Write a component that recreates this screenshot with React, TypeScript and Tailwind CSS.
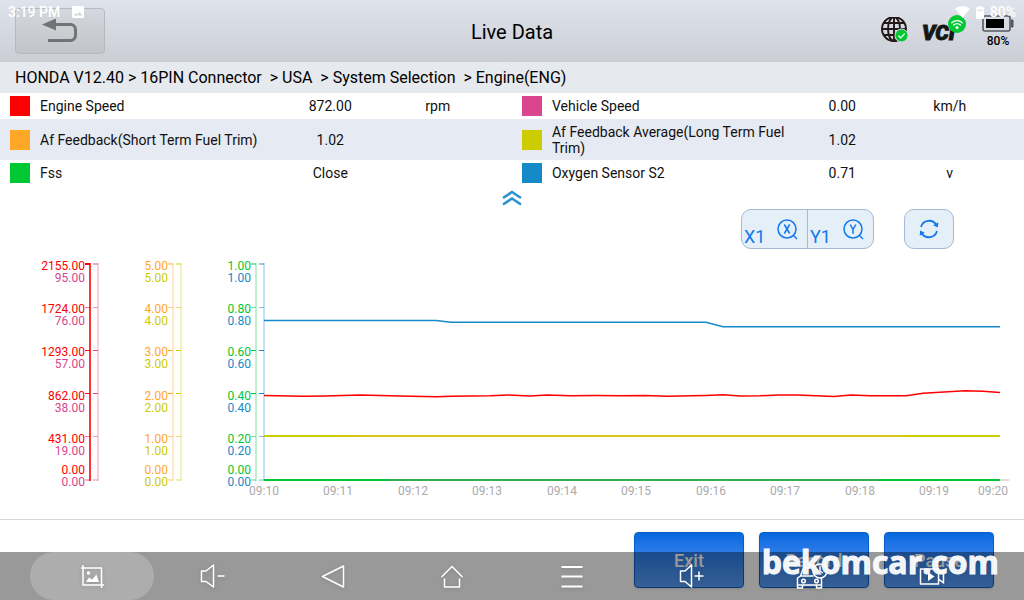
import type { ReactNode } from "react";

type Reading = {
  name: string;
  value: string;
  unit: string;
  swatch: string;
};

const rows: [Reading, Reading][] = [
  [
    { name: "Engine Speed", value: "872.00", unit: "rpm", swatch: "bg-[#ff0000]" },
    { name: "Vehicle Speed", value: "0.00", unit: "km/h", swatch: "bg-[#d9468f]" },
  ],
  [
    { name: "Af Feedback(Short Term Fuel Trim)", value: "1.02", unit: "", swatch: "bg-[#ffa726]" },
    { name: "Af Feedback Average(Long Term Fuel Trim)", value: "1.02", unit: "", swatch: "bg-[#cccc00]" },
  ],
  [
    { name: "Fss", value: "Close", unit: "", swatch: "bg-[#00c832]" },
    { name: "Oxygen Sensor S2", value: "0.71", unit: "v", swatch: "bg-[#148ac8]" },
  ],
];

// tick positions and label baselines, top to bottom
const ticks = [15, 58.5, 101.5, 144.5, 187.5, 231];
const tickOpacity = [0.45, 0.55, 1, 1, 0.55, 0.3];
const upperLabelY = [21, 64, 107, 151, 194, 225];
const lowerLabelY = [33, 76, 119, 163, 206, 237];

const axes = [
  { x: 90, labelX: 85, color: "#ff0000", strong: true, lower: false, labels: ["2155.00", "1724.00", "1293.00", "862.00", "431.00", "0.00"] },
  { x: 98, labelX: 85, color: "#d9468f", strong: false, lower: true, labels: ["95.00", "76.00", "57.00", "38.00", "19.00", "0.00"] },
  { x: 173, labelX: 168, color: "#ffa726", strong: false, lower: false, labels: ["5.00", "4.00", "3.00", "2.00", "1.00", "0.00"] },
  { x: 181, labelX: 168, color: "#cccc00", strong: false, lower: true, labels: ["5.00", "4.00", "3.00", "2.00", "1.00", "0.00"] },
  { x: 256, labelX: 251, color: "#00c832", strong: false, lower: false, labels: ["1.00", "0.80", "0.60", "0.40", "0.20", "0.00"] },
  { x: 264, labelX: 251, color: "#148ac8", strong: false, lower: true, labels: ["1.00", "0.80", "0.60", "0.40", "0.20", "0.00"] },
];

const times = [
  { x: 264, label: "09:10" },
  { x: 338, label: "09:11" },
  { x: 413, label: "09:12" },
  { x: 487, label: "09:13" },
  { x: 562, label: "09:14" },
  { x: 636, label: "09:15" },
  { x: 711, label: "09:16" },
  { x: 785, label: "09:17" },
  { x: 860, label: "09:18" },
  { x: 934, label: "09:19" },
  { x: 993, label: "09:20" },
];

function StatusBar() {
  return (
    <div className="pointer-events-none absolute inset-x-0 top-0 z-10 flex h-6 items-center px-2 text-sm font-medium text-white">
      <span>3:19 PM</span>
      <svg className="ml-3 size-3" viewBox="0 0 12 12" fill="currentColor">
        <path fillRule="evenodd" d="M1.5 0h9A1.5 1.5 0 0 1 12 1.5v9a1.5 1.5 0 0 1-1.5 1.5h-9A1.5 1.5 0 0 1 0 10.5v-9A1.5 1.5 0 0 1 1.5 0ZM1.8 9.5h8.600L7.600 5.800 5.600 8.400 4.200 6.700Z" />
      </svg>
      <div className="ml-auto flex items-center gap-1">
        <svg className="h-3 w-[15px]" viewBox="0 0 15 12" fill="currentColor">
          <path d="M0 2.600C4.200-.8 10.800-.8 15 2.600L7.500 12Z" />
        </svg>
        <svg className="mx-0.5 h-[13px] w-2" viewBox="0 0 8 13" fill="currentColor">
          <path d="M2.500 0h3v1.300H7a1 1 0 0 1 1 1V12a1 1 0 0 1-1 1H1a1 1 0 0 1-1-1V2.300a1 1 0 0 1 1-1h1.500Z" />
          <path d="M1 4.200h6" stroke="#cfd3da" strokeWidth="0.8" />
        </svg>
        <span>80%</span>
      </div>
    </div>
  );
}

function Header() {
  return (
    <header className="grid h-[62px] grid-cols-[1fr_auto_1fr] items-center bg-linear-to-b from-[#dfe3eb] to-[#cbced5] px-[10px]">
      <button
        aria-label="Back"
        className="ml-[5px] flex h-[46px] w-[90px] items-center justify-center rounded border border-[#b6b9bd] bg-linear-to-b from-[#d4d8de] to-[#c1c4c8]"
      >
        <svg className="h-6 w-[38px]" viewBox="0 0 38 24" fill="none">
          <path d="M13 5.500h16.500a5 5 0 0 1 5 5v6a5 5 0 0 1-5 5H7" stroke="#727375" strokeWidth="3" />
          <path d="M1 5.500 15-.5V11.500Z" fill="#727375" />
        </svg>
      </button>
      <h1 className="pt-0.5 text-xl text-black">Live Data</h1>
      <div className="flex items-center justify-end">
        <svg className="mr-3 size-7" viewBox="0 0 28 28" fill="none">
          <g transform="translate(0 -2)">
            <g stroke="#231815" strokeWidth="1.900">
              <circle cx="14" cy="14" r="12" />
              <ellipse cx="14" cy="14" rx="6" ry="12" />
              <path d="M14 2v24M2 14h24M4 8h20M4 20h20" />
            </g>
            <circle cx="21.500" cy="20.500" r="6.500" fill="#00c832" stroke="#d3d6dc" />
            <path d="m18.500 20.700 2.200 2.200 4-4.300" stroke="#fff" strokeWidth="1.300" />
          </g>
        </svg>
        <div className="relative mr-3 flex h-7 w-[50px] items-center pl-0.5">
          <span className="pt-1 text-[21px] font-black italic leading-7 text-[#161616] [-webkit-text-stroke:1px_#161616]">VCI</span>
          <svg className="absolute right-1 -top-0.5 size-[18px]" viewBox="0 0 18 18" fill="none">
            <circle cx="9" cy="9" r="9" fill="#00c832" />
            <path d="M3.800 7.700a7.600 7.600 0 0 1 10.400 0M5.600 10a5 5 0 0 1 6.800 0" stroke="#fff" strokeWidth="1.400" strokeLinecap="round" />
            <circle cx="9" cy="12.500" r="1.500" fill="#fff" />
          </svg>
        </div>
        <div className="flex flex-col items-center text-xs font-medium leading-4 text-black">
          <svg className="mt-0.5 mb-px h-[17px] w-8" viewBox="0 0 32 17" fill="none">
            <rect x="1" y="1" width="27" height="15" rx="2" stroke="#55585f" strokeWidth="1.600" />
            <path d="M29 5h2v7h-2" fill="#55585f" stroke="#55585f" />
            <path d="M4 4h18v9H4z" fill="#000" />
          </svg>
          <span>80%</span>
        </div>
      </div>
    </header>
  );
}

function ReadingCells({ reading }: { reading: Reading }) {
  return (
    <>
      <td className="py-[3px] pl-[10px]">
        <div className="flex items-center gap-[10px]">
          <span className={`size-5 shrink-0 ${reading.swatch}`} />
          <span>{reading.name}</span>
        </div>
      </td>
      <td className="text-center">{reading.value}</td>
      <td className="text-center">{reading.unit}</td>
      <td />
    </>
  );
}

function DataTable() {
  return (
    <table className="w-full table-fixed text-sm leading-4 text-[#111]">
      <colgroup>
        <col className="w-[27%]" />
        <col className="w-[10.5%]" />
        <col className="w-[10.5%]" />
        <col className="w-[2%]" />
        <col className="w-[27%]" />
        <col className="w-[10.5%]" />
        <col className="w-[10.5%]" />
        <col className="w-[2%]" />
      </colgroup>
      <tbody>
        {rows.map(([left, right], i) => (
          <tr key={left.name} className={i % 2 ? "h-[41px] bg-[#e6eaf2]" : "h-[26px]"}>
            <ReadingCells reading={left} />
            <ReadingCells reading={right} />
          </tr>
        ))}
      </tbody>
    </table>
  );
}

function ZoomButton({ axis }: { axis: "X" | "Y" }) {
  return (
    <button className="flex flex-1 items-start justify-between pl-[2px] pr-[9px] pt-2">
      <span className="pt-2 text-lg leading-[22px]">{axis}1</span>
      <svg className="size-[22px]" viewBox="0 0 22 22" fill="none" stroke="currentColor" strokeWidth="1.500">
        <circle cx="11" cy="11" r="9" />
        <path d="m17 17 4 4" />
        {axis === "X" ? <path d="m8.300 6.500 5.400 9m0-9-5.400 9" /> : <path d="m8.200 6.500 2.800 5 2.800-5M11 11.500v4.200" />}
      </svg>
    </button>
  );
}

function ChartControls() {
  return (
    <div className="flex h-10 justify-end gap-[30px] pr-[70px] text-[#0f78ee]">
      <div className="flex w-[133px] divide-x divide-[#a3b9d4] rounded-[10px] border border-[#a3b9d4] bg-[#e5eff8]">
        <ZoomButton axis="X" />
        <ZoomButton axis="Y" />
      </div>
      <button
        aria-label="Refresh"
        className="flex w-[50px] items-center justify-center rounded-[10px] border border-[#a3b9d4] bg-[#e5eff8]"
      >
        <svg className="size-5" viewBox="0 0 20 20" fill="none" stroke="currentColor" strokeWidth="1.800">
          <path d="M2 8a8.400 8.400 0 0 1 15.400-2M18 12a8.400 8.400 0 0 1-15.400 2" />
          <path d="m19.300 3.300-.5 5.200-4.600-2.300ZM.7 16.700l.5-5.200 4.600 2.300Z" fill="currentColor" stroke="none" />
        </svg>
      </button>
    </div>
  );
}

function Chart() {
  return (
    <svg className="w-full" viewBox="0 0 1024 256" fill="none" fontSize="12" role="img" aria-label="Live data graph">
      {axes.map((axis) => (
        <g key={axis.x}>
          <path d={`M${axis.x} 14V232`} stroke={axis.color} strokeWidth="2" opacity={axis.strong ? 0.8 : 0.25} />
          {ticks.map((y, i) => (
            <g key={y}>
              <path
                d={`M${axis.x - 5} ${y}h5`}
                stroke={axis.color}
                strokeWidth={i === 0 || i === 5 ? 2 : 1}
                opacity={axis.strong && i === 0 ? 1 : tickOpacity[i]}
              />
              <text
                x={axis.labelX}
                y={axis.lower ? lowerLabelY[i] : upperLabelY[i]}
                textAnchor="end"
                fill={axis.color}
              >
                {axis.labels[i]}
              </text>
            </g>
          ))}
        </g>
      ))}

      {times.map((t) => (
        <text key={t.label} x={t.x} y="246" textAnchor="middle" fill="#aaaaaa">
          {t.label}
        </text>
      ))}

      {/* Series */}
      <path d="M1000 231h9" stroke="#dddddd" strokeWidth="2" />
      <path d="M264 231H1000" stroke="#00c832" strokeWidth="2" />
      <path d="M387 231H877" stroke="#34b050" strokeWidth="2" />
      <path d="M264 187H1000" stroke="#cccc00" strokeWidth="2" />
      <path d="M340 186.500h65M486 186.500h68" stroke="#ffa726" opacity="0.4" />
      <path d="M356 187H906" stroke="#d8c618" strokeWidth="2" />
      <path d="M264 71.500H436L451 73.300H706L723 77.700H1000" stroke="#148ac8" strokeWidth="1.500" />
      <path
        d="M264 146.600 303 147.300 325 147 360 146 400 147 436 147.800 452 147.200 490 146.700 508 146 530 147 547 146 570 146.700 595 146.500 620 146.700 645 146.500 667 147.300 705 146.500 723 145.800 740 147 760 146.800 778 146H797L834 147.500 851 146 870 146.700H906L923 144.200 965 141.700 983 142.200 1000 143.500"
        stroke="#ff0000"
        strokeWidth="1.500"
      />
    </svg>
  );
}

function ActionButton({ children }: { children: ReactNode }) {
  return (
    <button className="h-14 w-[110px] rounded border border-[#0b5fc4] bg-linear-to-b from-[#0268df] to-[#5a9ff8] pt-0.5 text-lg font-medium text-white shadow">
      {children}
    </button>
  );
}

const navItems = [
  {
    label: "Screenshot",
    icon: (
      <>
        <path d="M4 2v20H25M2 5h20.500V25" />
        <path d="M7 19l3-4.500 3 2 4.500-5L20 19Z" fill="currentColor" stroke="none" />
        <circle cx="9.500" cy="10" r="1.700" fill="currentColor" stroke="none" />
      </>
    ),
  },
  { label: "Volume down", icon: <path d="M2.500 8v10.500H7L14.500 24V2L7 8ZM18.500 13h7" /> },
  { label: "Back", icon: <path d="M3.500 13.500 24.500 3v21Z" /> },
  { label: "Home", icon: <path d="M2.500 14 13 3.500 23.500 14M5.500 15.500V24h15v-8.500" /> },
  { label: "Menu", icon: <path d="M2.500 4h21M2.500 13.500h21M2.500 23.500h21" strokeWidth="2" /> },
  { label: "Volume up", icon: <path d="M1.500 8v10.500H6L12.500 24V2L6 8ZM15.500 13h9M20 8.500v9" /> },
  {
    label: "Vehicle",
    icon: (
      <>
        <path d="M13 5H6L3 13 0 15v7h24v-8M3 13H16M0 22v3h5v-3M19 22v3h5v-3" transform="translate(-1.500 0)" />
        <circle cx="4.500" cy="18" r="1.800" />
        <circle cx="17.500" cy="18" r="1.800" />
        <circle cx="21" cy="8" r="7" />
        <path d="M21 3.500V8l3 2" />
      </>
    ),
  },
  {
    label: "Record screen",
    icon: (
      <>
        <path d="M1.500 6h18v15h-18ZM19.500 11l5-4v13l-5-4" />
        <path d="m9 9 6.500 4.500L9 18Z" fill="currentColor" stroke="none" />
      </>
    ),
  },
];

function NavBar() {
  return (
    <nav className="absolute inset-x-0 bottom-0 grid h-12 grid-cols-8 bg-[#000000]/40 px-8 text-white">
      {navItems.map((item, i) => (
        <button
          key={item.label}
          aria-label={item.label}
          className={`-mx-0.5 flex items-center justify-center rounded-full ${i === 0 ? "bg-white/20" : ""}`}
        >
          <svg
            className="size-[26px] overflow-visible drop-shadow-sm"
            viewBox="0 0 26 26"
            fill="none"
            stroke="currentColor"
            strokeWidth="1.500"
            strokeLinejoin="round"
          >
            {item.icon}
          </svg>
        </button>
      ))}
    </nav>
  );
}

export default function App() {
  return (
    <div className="relative flex min-h-screen flex-col bg-white font-[Roboto,sans-serif]">
      <StatusBar />
      <Header />
      <div className="h-[31px] whitespace-pre bg-[#e6e9ee] px-[15px] text-base leading-[31px] text-black">
        {"HONDA V12.40 > 16PIN Connector  > USA  > System Selection  > Engine(ENG)"}
      </div>

      <main className="flex-1">
        <DataTable />
        <button aria-label="Collapse" className="mx-auto flex h-[23px] w-10 items-center justify-center text-[#2a93cf]">
          <svg className="h-4 w-5" viewBox="0 0 20 16" fill="none" stroke="currentColor" strokeWidth="2.600">
            <path d="m1 8 9-6 9 6M1 14.500l9-6 9 6" />
          </svg>
        </button>
        <ChartControls />
        <Chart />
      </main>

      <footer className="flex h-[81px] items-start justify-end gap-[15px] border-t border-[#d8d8d8] px-[30px] pt-3">
        <ActionButton>Exit</ActionButton>
        <ActionButton>Record</ActionButton>
        <ActionButton>Pause</ActionButton>
      </footer>

      <NavBar />
      <span className="pointer-events-none absolute bottom-[22px] right-[25px] font-['Open_Sans',sans-serif] text-[32px] font-bold leading-8 text-white/95 [-webkit-text-stroke:1px_#f8fafc]">
        bekomcar.com
      </span>
    </div>
  );
}
